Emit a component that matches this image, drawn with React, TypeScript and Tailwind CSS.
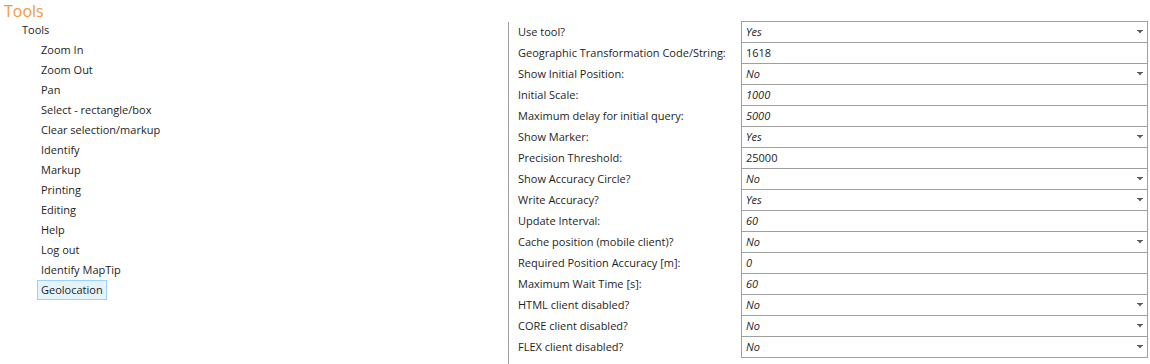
import React from 'react';

type Row = { label: string; value: string; italic?: boolean; select?: boolean };

const tools = [
  'Zoom In',
  'Zoom Out',
  'Pan',
  'Select - rectangle/box',
  'Clear selection/markup',
  'Identify',
  'Markup',
  'Printing',
  'Editing',
  'Help',
  'Log out',
  'Identify MapTip',
  'Geolocation',
];

const rows: Row[] = [
  { label: 'Use tool?', value: 'Yes', italic: true, select: true },
  { label: 'Geographic Transformation Code/String:', value: '1618' },
  { label: 'Show Initial Position:', value: 'No', italic: true, select: true },
  { label: 'Initial Scale:', value: '1000', italic: true },
  { label: 'Maximum delay for initial query:', value: '5000', italic: true },
  { label: 'Show Marker:', value: 'Yes', italic: true, select: true },
  { label: 'Precision Threshold:', value: '25000' },
  { label: 'Show Accuracy Circle?', value: 'No', italic: true, select: true },
  { label: 'Write Accuracy?', value: 'Yes', italic: true, select: true },
  { label: 'Update Interval:', value: '60', italic: true },
  { label: 'Cache position (mobile client)?', value: 'No', italic: true, select: true },
  { label: 'Required Position Accuracy [m]:', value: '0', italic: true },
  { label: 'Maximum Wait Time [s]:', value: '60', italic: true },
  { label: 'HTML client disabled?', value: 'No', italic: true, select: true },
  { label: 'CORE client disabled?', value: 'No', italic: true, select: true },
  { label: 'FLEX client disabled?', value: 'No', italic: true, select: true },
];

const Arrow = () => (
  <svg width="6" height="4" viewBox="0 0 6 4" className="mr-[4px]">
    <path d="M0 0H6V1H5L3 3.5L1 1H0Z" fill="#5a5a5a" />
  </svg>
);

const App: React.FC = () => {
  return (
    <div className="w-[1150px] h-[364px] bg-white flex overflow-hidden font-['Open_Sans',sans-serif] text-[11px] text-[#1e1e1e]">
      <div className="w-[508px] shrink-0">
        <div className="pl-[4px] h-[20px] leading-[22px] text-[16px] text-[#f09a3c]">Tools</div>
        <div className="pl-[22px] h-[20px] leading-[20px]">Tools</div>
        <div className="pl-[37px]">
          {tools.map((t) => (
            <div key={t} className="h-[20px] flex items-center">
              {t === 'Geolocation' ? (
                <span className="h-[20px] leading-[18px] px-[3px] border border-[#99d1ff] bg-[#e5f3fb]">{t}</span>
              ) : (
                <span className="px-[4px]">{t}</span>
              )}
            </div>
          ))}
        </div>
      </div>

      <div className="mt-[22px] flex border-l border-[#a0a0a0] h-[342px]">
        <div className="w-[232px] -mt-[1px]">
          {rows.map((r) => (
            <div key={r.label} className="h-[21px] leading-[21px] pl-[9px] whitespace-nowrap">
              {r.label}
            </div>
          ))}
        </div>
        <div className="w-[407px] -mt-[1px] self-start border-l border-r border-b border-[#a0a0a0]">
          {rows.map((r) => (
            <div
              key={r.label}
              className="h-[21px] border-t border-[#a0a0a0] flex items-center justify-between pl-[4px]"
            >
              <span className={r.italic ? 'italic' : ''}>{r.value}</span>
              {r.select && <Arrow />}
            </div>
          ))}
        </div>
      </div>
    </div>
  );
};

export default App;
